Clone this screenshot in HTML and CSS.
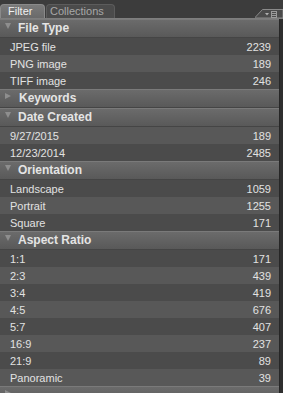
FILE: index.html
```html
<!DOCTYPE html>
<html>
<head>
<meta charset="utf-8">
<link rel="stylesheet" href="styles.css">
</head>
<body>
<div class="panel">
  <div class="main">
    <div class="tabs">
      <div class="tab active">Filter</div>
      <div class="tab">Collections</div>
      <div class="tab-spacer"></div>
      <svg class="menu-tab" width="28" height="9" viewBox="0 0 28 9">
        <path d="M0 8.5 L7.5 0.5 L28 0.5 L28 9 L0 9 Z" fill="#4b4b4b" stroke="#8a8a8a" stroke-width="1"/>
        <path d="M10 4 L14 4 L12 6.5 Z" fill="#b0b0b0"/>
        <rect x="16.5" y="2.5" width="5" height="6" fill="none" stroke="#9a9a9a" stroke-width="1"/>
        <path d="M17 4.5 H21 M17 6.5 H21" stroke="#9a9a9a" stroke-width="1"/>
      </svg>
    </div>
    <div class="list">
      <div class="header"><span class="tri down"></span>File Type</div>
      <div class="row"><span>JPEG file</span><span>2239</span></div>
      <div class="row alt"><span>PNG image</span><span>189</span></div>
      <div class="row"><span>TIFF image</span><span>246</span></div>
      <div class="header"><span class="tri right"></span>Keywords</div>
      <div class="header"><span class="tri down"></span>Date Created</div>
      <div class="row alt"><span>9/27/2015</span><span>189</span></div>
      <div class="row"><span>12/23/2014</span><span>2485</span></div>
      <div class="header"><span class="tri down"></span>Orientation</div>
      <div class="row"><span>Landscape</span><span>1059</span></div>
      <div class="row alt"><span>Portrait</span><span>1255</span></div>
      <div class="row"><span>Square</span><span>171</span></div>
      <div class="header"><span class="tri down"></span>Aspect Ratio</div>
      <div class="row"><span>1:1</span><span>171</span></div>
      <div class="row alt"><span>2:3</span><span>439</span></div>
      <div class="row"><span>3:4</span><span>419</span></div>
      <div class="row alt"><span>4:5</span><span>676</span></div>
      <div class="row"><span>5:7</span><span>407</span></div>
      <div class="row alt"><span>16:9</span><span>237</span></div>
      <div class="row"><span>21:9</span><span>89</span></div>
      <div class="row alt"><span>Panoramic</span><span>39</span></div>
      <div class="header"><span class="tri right"></span></div>
    </div>
  </div>
  <div class="edge"></div>
</div>
</body>
</html>
```
FILE: styles.css
```css
html, body {
  margin: 0;
  padding: 0;
  background: #3a3a3a;
}
body {
  font-family: "Liberation Sans", Arial, sans-serif;
  font-size: 11px;
  width: 283px;
  height: 393px;
  overflow: hidden;
}
.panel {
  display: flex;
  width: 283px;
  height: 393px;
  overflow: hidden;
}
.main {
  flex: 1;
  display: flex;
  flex-direction: column;
  min-width: 0;
}
.main > *, .list > * {
  flex: none;
}
.edge {
  width: 4px;
  background: #2f2f2f;
  border-left: 1px solid #262626;
  box-sizing: border-box;
}
.tabs {
  height: 19px;
  box-sizing: border-box;
  display: flex;
  align-items: flex-end;
  background: #3c3c3c;
  border-bottom: 1px solid #7e7e7e;
  margin-right: -4px;
  position: relative;
  z-index: 1;
}
.tab {
  height: 14px;
  line-height: 13px;
  box-sizing: border-box;
  padding: 0 0 0 3px;
  border-radius: 4px 4px 0 0;
  color: #a8a8a8;
  background: #4b4b4b;
  border: 1px solid #5c5c5c;
  border-bottom: none;
  width: 69px;
  margin-left: 1px;
  flex: none;
}
.tab.active {
  width: 45px;
  margin-left: 0;
  padding-left: 7px;
  color: #f0f0f0;
  background: linear-gradient(#7a7a7a, #6a6a6a);
  border-color: #8a8a8a;
}
.tab-spacer {
  flex: 1;
}
.menu-tab {
  display: block;
  flex: none;
}
.list {
  display: flex;
  flex-direction: column;
}
.header {
  height: 19px;
  box-sizing: border-box;
  display: flex;
  align-items: center;
  padding-left: 5px;
  font-size: 12px;
  font-weight: bold;
  color: #e4e4e4;
  background: linear-gradient(#7a7a7a 0, #7a7a7a 1px, #6b6b6b 1px, #595959 100%);
  border-bottom: 1px solid #454545;
}
.tri {
  width: 0;
  height: 0;
  margin-right: 7px;
  align-self: flex-start;
}
.tri.down {
  border-left: 3.5px solid transparent;
  border-right: 3.5px solid transparent;
  border-top: 6px solid #8e8e8e;
  margin-top: 4px;
}
.tri.right {
  border-top: 3.5px solid transparent;
  border-bottom: 3.5px solid transparent;
  border-left: 6px solid #8e8e8e;
  margin-top: 4px;
  margin-right: 8px;
}
.row {
  height: 17px;
  box-sizing: border-box;
  display: flex;
  align-items: center;
  justify-content: space-between;
  padding: 0 8px 0 10px;
  color: #e2e2e2;
  background: #4b4b4b;
}
.row.alt {
  background: #585858;
}
```
